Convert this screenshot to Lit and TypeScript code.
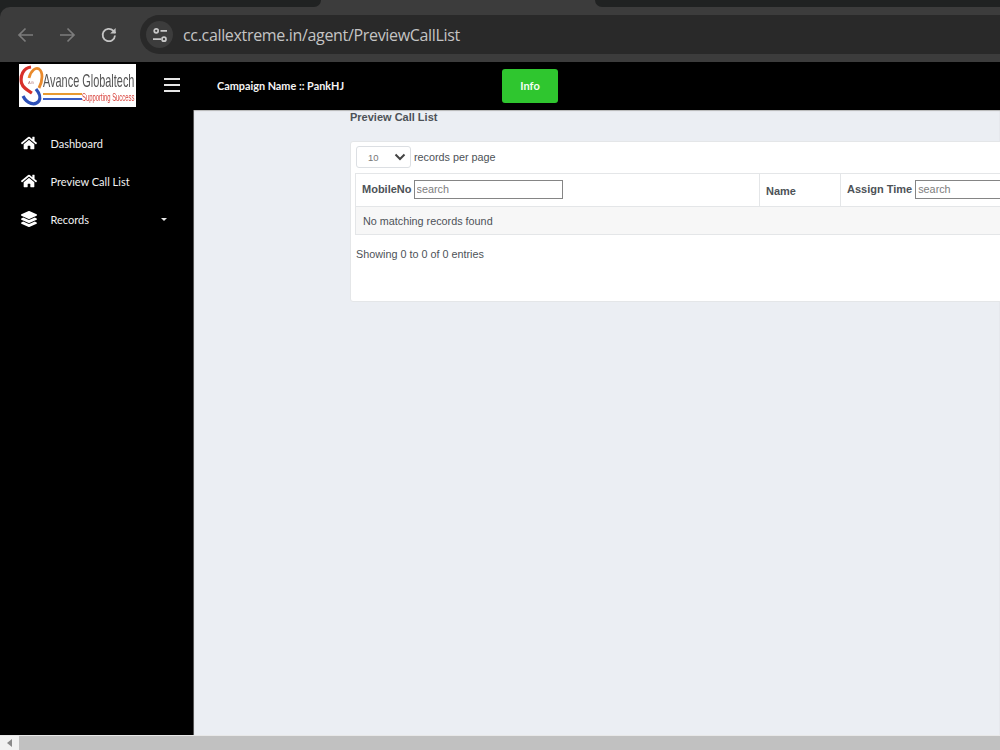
import { LitElement, html, css, svg } from "lit";
import { customElement } from "lit/decorators.js";

const HOME = svg`<path d="M280.37 148.26L96 300.11V464a16 16 0 0 0 16 16l112.06-.29a16 16 0 0 0 15.92-16V368a16 16 0 0 1 16-16h64a16 16 0 0 1 16 16v95.64a16 16 0 0 0 16 16.05L464 480a16 16 0 0 0 16-16V300L295.67 148.26a12.19 12.19 0 0 0-15.3 0zM571.6 251.47L488 182.56V44.05a12 12 0 0 0-12-12h-56a12 12 0 0 0-12 12v72.61L318.47 43a48 48 0 0 0-61 0L4.34 251.47a12 12 0 0 0-1.6 16.9l25.5 31A12 12 0 0 0 45.15 301l235.22-193.74a12.19 12.19 0 0 1 15.3 0L530.9 301a12 12 0 0 0 16.9-1.6l25.5-31a12 12 0 0 0-1.7-16.93z"/>`;
const LAYERS = svg`<path d="M12.41 148.02l232.94 105.67c6.8 3.09 14.49 3.09 21.29 0l232.94-105.67c16.55-7.51 16.55-32.52 0-40.03L266.65 2.31a25.607 25.607 0 0 0-21.29 0L12.41 107.98c-16.55 7.51-16.55 32.53 0 40.04zm487.18 88.28l-58.09-26.33-161.64 73.27c-7.56 3.43-15.59 5.17-23.86 5.17s-16.29-1.74-23.86-5.17L70.51 209.97l-58.1 26.33c-16.55 7.5-16.55 32.5 0 40l232.94 105.59c6.8 3.08 14.49 3.08 21.29 0L499.59 276.3c16.55-7.5 16.55-32.5 0-40zm0 127.8l-57.87-26.23-161.86 73.37c-7.56 3.43-15.59 5.17-23.86 5.17s-16.29-1.74-23.86-5.17L70.29 337.87 12.41 364.1c-16.55 7.5-16.55 32.5 0 40l232.94 105.59c6.8 3.08 14.49 3.08 21.29 0L499.59 404.1c16.55-7.5 16.55-32.5 0-40z"/>`;

@customElement("app-root")
export class AppRoot extends LitElement {
  static styles = css`
    :host { display: block; width: 1000px; height: 750px; overflow: hidden; background: #ebeef3; font-family: "Liberation Sans", Arial, sans-serif; }
    .page { display: flex; flex-direction: column; width: 1000px; height: 750px; }

    .tabstrip { flex: none; height: 7px; background: #3c3c3c; display: flex; }
    .tab-dark { background: #202222; }
    .tab-left { width: 321px; border-bottom-right-radius: 7px; }
    .tab-active { width: 274px; }
    .tab-right { flex: 1; border-bottom-left-radius: 7px; }

    .frame { flex: none; background: #202222; }
    .chrome { background: #3c3c3c; border-radius: 10px 0 0 0; padding: 8px 0; }
    .toolbar { height: 39px; display: flex; align-items: center; padding-left: 16px; box-sizing: border-box; }
    .nav { width: 20px; height: 20px; margin-right: 21px; color: #7c7c7c; flex: none; }
    .nav.fwd { margin-right: 22px; }
    .nav.reload { color: #c4c4c4; }
    .omni { flex: 1; align-self: stretch; background: #292929; border-radius: 20px 0 0 20px; display: flex; align-items: center; padding-left: 6px; color: #c4c4c4; font: 16px "Open Sans", sans-serif; }
    .site { width: 27px; height: 27px; border-radius: 50%; background: #3c3c3c; display: flex; align-items: center; justify-content: center; margin-right: 10px; flex: none; }
    .site svg { width: 18px; height: 18px; color: #c8c8c8; }
    .url { letter-spacing: -0.33px; }

    .topbar { flex: none; height: 48px; background: #000; display: flex; align-items: center; color: #fff; font-family: Lato, sans-serif; }
    .logo { flex: none; width: 117px; height: 43px; margin: 0 0 2px 19px; background: #fff; }
    .logo svg { display: block; width: 117px; height: 43px; filter: blur(0.4px); }
    .burger { flex: none; width: 16px; margin-left: 28px; margin-bottom: 2px; display: flex; flex-direction: column; gap: 4px; }
    .burger i { display: block; height: 2px; background: #e6e6e6; }
    .campaign { flex: none; width: 285px; margin: 0 0 2px 37px; font-size: 10.85px; font-weight: 700; color: #f4f4f4; }
    .info { flex: none; width: 56px; height: 34px; padding-bottom: 1px; box-sizing: border-box; display: flex; align-items: center; justify-content: center; background: #2fc62f; border-radius: 3px; font-size: 11px; font-weight: 700; color: #f4fff4; }

    .body { flex: 1; min-height: 0; display: flex; }
    .side { flex: none; width: 194px; background: #000; color: #f2f2f2; font-family: Lato, sans-serif; font-size: 11px; padding-top: 14px; box-sizing: border-box; border-right: 1px solid #555; }
    .item { height: 38px; display: flex; align-items: center; padding-left: 21px; }
    .item svg { width: 16px; height: 16px; fill: #fff; flex: none; margin-right: 13.5px; }
    .item .label { flex: 1; }
    .caret { width: 0; height: 0; border: 3px solid transparent; border-top-color: #e8e8e8; border-bottom: 0; margin-right: 26px; }

    .main { flex: 1; min-width: 0; padding-left: 156px; overflow: hidden; color: #4d5257; box-shadow: inset 0 1px 1px #b5b5b5; }
    .title { height: 31px; padding-top: 1px; box-sizing: border-box; font-size: 11px; font-weight: 700; line-height: 12px; }
    .card { width: 800px; height: 161px; box-sizing: border-box; background: #fff; border: 1px solid #e4e6e8; border-radius: 3px; padding: 4px 4px; font-size: 10.8px; }
    .len { display: flex; align-items: center; gap: 3px; height: 22px; margin: 0 0 5px 1px; }
    .select { width: 55px; height: 22px; box-sizing: border-box; border: 1px solid #dcdfe3; border-radius: 3px; display: flex; align-items: center; justify-content: space-between; padding: 0 4px 0 11px; font-size: 9.5px; color: #777; }
    .select svg { width: 12px; height: 8px; }
    table { border-collapse: collapse; table-layout: fixed; width: 790px; }
    th, td { border: 1px solid #e4e6e8; padding: 0 0 0 6px; height: 33px; box-sizing: border-box; text-align: left; font-size: 10.8px; }
    th { font-weight: 700; font-size: 11px; }
    td { height: 28px; background: #f7f7f7; padding-left: 7px; }
    .hcell { display: flex; align-items: center; gap: 2px; margin-top: -2px; }
    .up { gap: 3px; }
    .down { display: block; margin-top: 2px; }
    input { width: 149px; height: 19px; box-sizing: border-box; border: 1px solid #858585; padding: 0 2px; font: 10.8px "Liberation Sans", Arial, sans-serif; color: #777; border-radius: 0; background: #fff; }
    input::placeholder { color: #7d7d7d; opacity: 1; }
    .entries { margin: 13px 0 0 1px; }

    .hscroll { flex: none; height: 15px; background: #f1f1f1; display: flex; border-top: 1px solid #e8e8e8; box-sizing: border-box; }
    .arrow { flex: none; width: 19px; display: flex; align-items: center; justify-content: center; }
    .arrow i { width: 0; height: 0; border: 4px solid transparent; border-right: 5px solid #8a8a8a; border-left: 0; }
    .thumb { flex: 1; background: #c1c1c1; }
  `;

  render() {
    return html`<div class="page">
      <div class="tabstrip">
        <div class="tab-dark tab-left"></div>
        <div class="tab-active"></div>
        <div class="tab-dark tab-right"></div>
      </div>
      <div class="frame"><div class="chrome"><div class="toolbar">
        <svg class="nav" viewBox="0 0 20 20" fill="none" stroke="currentColor" stroke-width="1.7"><path d="M17 10H3.500M9.500 3.500 3 10l6.500 6.500"/></svg>
        <svg class="nav fwd" viewBox="0 0 20 20" fill="none" stroke="currentColor" stroke-width="1.7"><path d="M3 10h13.500M10.500 3.500 17 10l-6.500 6.500"/></svg>
        <svg class="nav reload" viewBox="0 0 20 20" fill="none" stroke="currentColor" stroke-width="1.8"><path d="M16 10.500A6.200 6.200 0 1 1 14.200 5.600L16.500 8"/><path d="M16.600 3v5.400h-5.400" fill="currentColor" stroke="none"/></svg>
        <div class="omni">
          <div class="site"><svg viewBox="0 0 18 18" fill="none" stroke="currentColor" stroke-width="1.7"><circle cx="5.200" cy="4.800" r="2"/><path d="M9.500 4.800H16M2 13.200h8"/><circle cx="13" cy="13.200" r="2"/></svg></div>
          <span class="url">cc.callextreme.in/agent/PreviewCallList</span>
        </div>
      </div></div></div>

      <div class="topbar">
        <div class="logo">
          <svg viewBox="0 0 117 43">
            <path d="M12 3C4 4 1 12 2.500 19C4 24 8 26 13 29" fill="none" stroke="#d8302a" stroke-width="3.200"/>
            <path d="M10 14C12 6 17 3 20 5C24 8 24 16 20 24" fill="none" stroke="#e98a2c" stroke-width="2.800"/>
            <path d="M4 32C8 40 16 42 20 37C22 33 21 30 17 25" fill="none" stroke="#2c4fb8" stroke-width="3.200"/>
            <text x="9" y="20" font-family="Liberation Sans, sans-serif" font-size="4" fill="#b07070">AG</text>
            <text transform="translate(24 23) scale(0.575 1)" font-family="Liberation Sans, sans-serif" font-size="19" fill="#555">Avance Globaltech</text>
            <rect x="24" y="29" width="39" height="2" fill="#e89a30"/>
            <rect x="24" y="34" width="39" height="2" fill="#3c5ec4"/>
            <text transform="translate(63 37) scale(0.59 1)" font-family="Liberation Sans, sans-serif" font-size="10" fill="#d8403a">Supporting Success</text>
          </svg>
        </div>
        <div class="burger"><i></i><i></i><i></i></div>
        <div class="campaign">Campaign Name :: PankHJ</div>
        <div class="info">Info</div>
      </div>

      <div class="body">
        <nav class="side">
          <div class="item"><svg viewBox="0 0 576 512">${HOME}</svg><span class="label">Dashboard</span></div>
          <div class="item"><svg viewBox="0 0 576 512">${HOME}</svg><span class="label">Preview Call List</span></div>
          <div class="item"><svg viewBox="0 0 512 512">${LAYERS}</svg><span class="label">Records</span><span class="caret"></span></div>
        </nav>
        <main class="main">
          <div class="title">Preview Call List</div>
          <div class="card">
            <div class="len">
              <div class="select"><span>10</span><svg viewBox="0 0 12 8" fill="none" stroke="#444" stroke-width="2"><path d="M1.500 1.500 6 6l4.500-4.500"/></svg></div>
              <span>records per page</span>
            </div>
            <table>
              <colgroup><col style="width:404px" /><col style="width:81px" /><col /></colgroup>
              <thead><tr>
                <th><div class="hcell">MobileNo <input placeholder="search" /></div></th>
                <th><span class="down">Name</span></th>
                <th><div class="hcell up">Assign Time <input placeholder="search" /></div></th>
              </tr></thead>
              <tbody><tr><td colspan="3">No matching records found</td></tr></tbody>
            </table>
            <div class="entries">Showing 0 to 0 of 0 entries</div>
          </div>
        </main>
      </div>

      <div class="hscroll"><div class="arrow"><i></i></div><div class="thumb"></div></div>
    </div>`;
  }
}
